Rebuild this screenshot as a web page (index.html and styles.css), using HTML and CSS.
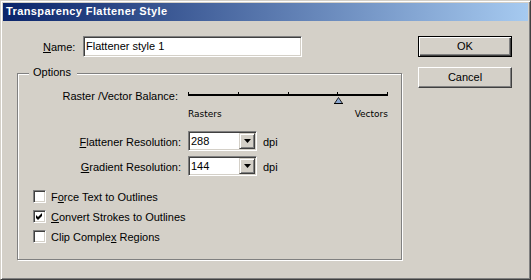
FILE: index.html
```html
<!DOCTYPE html>
<html lang="en">
<head>
    <meta charset="UTF-8">
    <title>Transparency Flattener Style</title>
    <link rel="stylesheet" href="styles.css">
</head>
<body>
    <div class="window">
        <div class="titlebar">Transparency Flattener Style</div>

        <div class="client">
            <div class="main">
                <!-- Имя стиля -->
                <div class="name-row">
                    <span class="name-label"><u>N</u>ame:</span>
                    <div class="textbox">Flattener style 1</div>
                </div>

                <!-- Группа параметров -->
                <div class="group">
                    <div class="legend">Options</div>

                    <div class="slider-row">
                        <span class="row-label slider-label">Raster /Vector Balance:</span>
                        <div class="slider">
                            <div class="track">
                                <span class="tick"></span>
                                <span class="tick"></span>
                                <span class="tick"></span>
                                <span class="tick"></span>
                                <span class="tick"></span>
                            </div>
                            <svg class="thumb" width="9" height="7" viewBox="0 0 9 7">
                                <polygon points="4.5,0.5 8.5,6.5 0.5,6.5" fill="#8aa6d0" stroke="#202020" stroke-width="1"/>
                                <rect x="0" y="6" width="9" height="1" fill="#000"/>
                            </svg>
                        </div>
                    </div>
                    <div class="slider-ends">
                        <span>Rasters</span>
                        <span>Vectors</span>
                    </div>

                    <div class="combo-row">
                        <span class="row-label"><u>F</u>lattener Resolution:</span>
                        <div class="combo">
                            <span class="combo-value">288</span>
                            <span class="combo-btn">
                                <svg width="7" height="4" viewBox="0 0 7 4"><polygon points="0,0 7,0 3.5,4" fill="#000"/></svg>
                            </span>
                        </div>
                        <span class="unit">dpi</span>
                    </div>
                    <div class="combo-row second">
                        <span class="row-label"><u>G</u>radient Resolution:</span>
                        <div class="combo">
                            <span class="combo-value">144</span>
                            <span class="combo-btn">
                                <svg width="7" height="4" viewBox="0 0 7 4"><polygon points="0,0 7,0 3.5,4" fill="#000"/></svg>
                            </span>
                        </div>
                        <span class="unit">dpi</span>
                    </div>

                    <div class="checks">
                        <div class="check-row">
                            <span class="check-box"></span>
                            <span>F<u>o</u>rce Text to Outlines</span>
                        </div>
                        <div class="check-row">
                            <span class="check-box">
                                <svg width="7" height="7" viewBox="0 0 7 7"><path d="M0 2 L2 4 L6 0 L6 3 L2 7 L0 5 Z" fill="#000"/></svg>
                            </span>
                            <span><u>C</u>onvert Strokes to Outlines</span>
                        </div>
                        <div class="check-row">
                            <span class="check-box"></span>
                            <span>Clip Comple<u>x</u> Regions</span>
                        </div>
                    </div>
                </div>
            </div>

            <div class="buttons">
                <div class="button default">OK</div>
                <div class="button">Cancel</div>
            </div>
        </div>
    </div>
</body>
</html>
```

FILE: styles.css
```css
* {
    box-sizing: border-box;
}

body {
    margin: 0;
    background-color: #d4d0c8;
    font-family: "Liberation Sans", Arial, sans-serif;
    font-size: 11px;
    color: #000;
}

u {
    text-decoration-thickness: 1px;
    text-underline-offset: 1px;
}

.window {
    width: 531px;
    height: 280px;
    background-color: #d4d0c8;
    border: 1px solid;
    border-color: #d4d0c8 #404040 #404040 #d4d0c8;
    box-shadow: inset 1px 1px #ffffff, inset -1px -1px #808080;
    padding: 2px;
}

.titlebar {
    height: 18px;
    padding: 0 0 2px 3px;
    line-height: 16px;
    background: linear-gradient(to right, #0a246a, #a6caf0);
    color: #ffffff;
    font-weight: bold;
    letter-spacing: 0.4px;
}

.client {
    display: flex;
    align-items: flex-start;
}

.main {
    width: 399px;
    padding: 15px 0 0 14px;
}

.name-row {
    display: flex;
    align-items: center;
    height: 21px;
    padding-left: 26px;
}

.name-label {
    width: 32px;
    margin-right: 8px;
}

.textbox {
    width: 219px;
    height: 21px;
    padding-left: 2px;
    line-height: 19px;
    background-color: #ffffff;
    border: 1px solid;
    border-color: #808080 #ffffff #ffffff #808080;
    box-shadow: inset 1px 1px #404040, inset -1px -1px #d4d0c8;
}

.group {
    margin-top: 16px;
    width: 385px;
    height: 187px;
    border: 1px solid #808080;
    box-shadow: 1px 1px #ffffff, inset 1px 1px #ffffff;
}

.legend {
    width: max-content;
    margin: -8px 0 0 11px;
    padding: 0 6px 0 4px;
    line-height: 13px;
    background-color: #d4d0c8;
}

.row-label {
    width: 163px;
    text-align: right;
}

.slider-row {
    display: flex;
    height: 14px;
    margin-top: 10px;
    line-height: 14px;
}

.slider-label {
    padding-right: 3px;
}

.slider {
    position: relative;
    width: 200px;
    height: 14px;
    margin-left: 7px;
}

.track {
    display: flex;
    justify-content: space-between;
    height: 4px;
    margin-top: 3px;
    border-bottom: 2px solid #000;
}

.tick {
    width: 1px;
    height: 4px;
    background-color: #000;
}

.thumb {
    position: absolute;
    left: 146px;
    top: 8px;
}

.slider-ends {
    display: flex;
    justify-content: space-between;
    width: 200px;
    margin: 5px 0 0 170px;
    font-family: "DejaVu Sans", sans-serif;
    font-size: 9px;
    line-height: 12px;
}

.combo-row {
    display: flex;
    align-items: center;
    height: 20px;
    margin-top: 11px;
}

.combo-row.second {
    margin-top: 5px;
}

.combo-row .row-label {
    padding-top: 1px;
}

.combo {
    display: flex;
    width: 69px;
    height: 20px;
    margin-left: 7px;
    background-color: #ffffff;
    border: 1px solid;
    border-color: #808080 #ffffff #ffffff #808080;
    box-shadow: inset 1px 1px #404040, inset -1px -1px #d4d0c8;
    padding: 1px;
}

.combo-value {
    flex: 1;
    padding-left: 1px;
    line-height: 16px;
}

.combo-btn {
    display: flex;
    align-items: center;
    justify-content: center;
    width: 16px;
    height: 16px;
    background-color: #d4d0c8;
    border: 1px solid;
    border-color: #d4d0c8 #404040 #404040 #d4d0c8;
    box-shadow: inset 1px 1px #ffffff, inset -1px -1px #808080;
}

.unit {
    margin-left: 6px;
    padding-top: 1px;
}

.checks {
    margin-top: 11px;
    padding-left: 15px;
}

.check-row {
    display: flex;
    height: 20px;
    line-height: 20px;
}

.check-box {
    display: flex;
    align-items: center;
    justify-content: center;
    width: 13px;
    height: 13px;
    margin: 3px 5px 0 0;
    background-color: #ffffff;
    border: 1px solid;
    border-color: #808080 #ffffff #ffffff #808080;
    box-shadow: inset 1px 1px #404040, inset -1px -1px #d4d0c8;
}

.buttons {
    display: flex;
    flex-direction: column;
    gap: 10px;
    margin-left: 16px;
    padding-top: 15px;
}

.button {
    width: 94px;
    height: 21px;
    line-height: 19px;
    text-align: center;
    background-color: #d4d0c8;
    border: 1px solid;
    border-color: #ffffff #404040 #404040 #ffffff;
    box-shadow: inset -1px -1px #808080;
}

.button.default {
    border-color: #000;
    box-shadow: inset 1px 1px #ffffff, inset -1px -1px #404040, inset -2px -2px #808080;
}
```
